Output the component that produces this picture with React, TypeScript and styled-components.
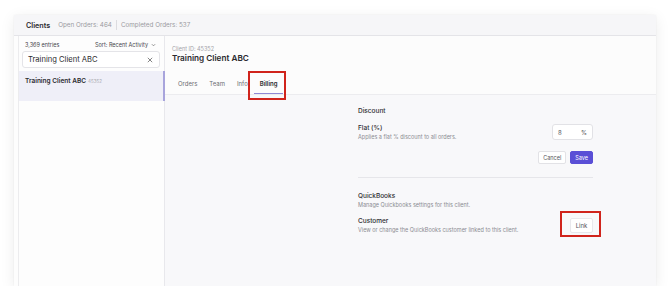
import React from "react";
import styled, { createGlobalStyle } from "styled-components";

const Global = createGlobalStyle`
  html, body { margin: 0; padding: 0; background: #ffffff; }
  body { font-family: Inter, "Noto Sans", sans-serif; color: #2f2f33; }
  * { box-sizing: border-box; }
`;

const Card = styled.div`
  margin: 15px 0 0 14px;
  width: 642px;
  height: 271px;
  background: #fdfdfd;
  box-shadow: 0 3px 14px rgba(0, 0, 0, 0.08), 0 0 2px rgba(0, 0, 0, 0.05);
  display: flex;
  flex-direction: column;
`;

const Header = styled.div`
  height: 21px;
  background: #f6f6f8;
  border-bottom: 1px solid #e4e4e8;
  display: flex;
  align-items: center;
  padding-left: 12px;
  font-size: 6.3px;
  color: #9a9aa0;
`;

const HeaderTitle = styled.span`
  font-size: 7.2px;
  font-weight: 600;
  color: #2c2c30;
  margin-right: 8px;
`;

const Sep = styled.span`
  width: 1px;
  height: 10px;
  background: #dcdce0;
  margin: 0 4px;
`;

const Body = styled.div`
  flex: 1;
  display: flex;
  min-height: 0;
`;

const Gutter = styled.div`
  width: 5px;
  background: #fdfdfd;
  border-right: 1px solid #ececee;
`;

const Sidebar = styled.div`
  width: 146px;
  background: #fdfdfd;
  border-right: 1px solid #e8e8ec;
  display: flex;
  flex-direction: column;
`;

const SideTop = styled.div`
  display: flex;
  justify-content: space-between;
  align-items: center;
  padding: 4px 8px 0 6px;
  height: 13px;
  font-size: 5.5px;
  color: #46464c;
`;

const SortLabel = styled.span`
  display: flex;
  align-items: center;
  gap: 3px;
`;

const Search = styled.div`
  margin: 2px 4px 3px 3px;
  height: 17px;
  border: 1px solid #e4e4e8;
  border-radius: 3px;
  background: #fff;
  display: flex;
  align-items: center;
  justify-content: space-between;
  padding: 0 6px 0 5px;
  font-size: 7.6px;
  color: #2c2c30;
`;

const Item = styled.div<{ $active?: boolean }>`
  height: 30px;
  background: ${(p) => (p.$active ? "#efeff8" : "transparent")};
  border-right: 2px solid ${(p) => (p.$active ? "#a8a4dc" : "transparent")};
  margin-right: -1px;
  padding: 6px 6px;
  font-size: 6.5px;
  font-weight: 600;
  color: #2c2c30;
`;

const ItemId = styled.span`
  font-size: 4.5px;
  font-weight: 400;
  color: #a8a8ae;
  margin-left: 2px;
`;

const Main = styled.div`
  flex: 1;
  display: flex;
  flex-direction: column;
  background: #f8f8fa;
`;

const MainTop = styled.div`
  position: relative;
  background: #fcfcfc;
  border-bottom: 1px solid #ececef;
  padding: 10px 0 0 7px;
  height: 59px;
  display: flex;
  flex-direction: column;
`;

const ClientId = styled.div`
  font-size: 5.5px;
  color: #a4a4aa;
`;

const Title = styled.div`
  font-size: 8.2px;
  font-weight: 600;
  color: #2a2a2e;
  margin-top: 1px;
`;

const Tabs = styled.div`
  display: flex;
  margin-top: 17px;
`;

const Tab = styled.div<{ $active?: boolean }>`
  font-size: 6px;
  color: ${(p) => (p.$active ? "#2a2a2e" : "#6c6c72")};
  font-weight: ${(p) => (p.$active ? 600 : 400)};
  padding: 0 6px 6px;
  border-bottom: 1px solid ${(p) => (p.$active ? "#8f89d4" : "transparent")};
`;

const Highlight = styled.div<{ $l: number; $t: number; $w: number; $h: number }>`
  position: absolute;
  left: ${(p) => p.$l}px;
  top: ${(p) => p.$t}px;
  width: ${(p) => p.$w}px;
  height: ${(p) => p.$h}px;
  border: 2.5px solid #d0241c;
  pointer-events: none;
`;

const Content = styled.div`
  padding: 12px 0 0 193px;
  width: 428px;
  display: flex;
  flex-direction: column;
`;

const SectionTitle = styled.div<{ $mt?: number }>`
  font-size: 6.5px;
  font-weight: 500;
  color: #2c2c30;
  margin-top: ${(p) => p.$mt ?? 0}px;
`;

const Row = styled.div<{ $mt: number }>`
  display: flex;
  justify-content: space-between;
  align-items: center;
  margin-top: ${(p) => p.$mt}px;
  position: relative;
`;

const Label = styled.div`
  font-size: 6.5px;
  font-weight: 500;
  color: #2c2c30;
`;

const Help = styled.div`
  font-size: 5.5px;
  color: #8c8c92;
  margin-top: 2px;
`;

const Input = styled.div`
  width: 41px;
  height: 16px;
  border: 1px solid #e2e2e6;
  border-radius: 3px;
  background: #fff;
  display: flex;
  align-items: center;
  justify-content: space-between;
  padding: 0 5px;
  font-size: 6px;
  color: #55555a;
`;

const Actions = styled.div`
  display: flex;
  justify-content: flex-end;
  gap: 4px;
  margin-top: 11px;
`;

const Button = styled.div<{ $primary?: boolean }>`
  height: 13px;
  padding: 0 4px;
  border-radius: 2px;
  display: flex;
  align-items: center;
  font-size: 5.5px;
  background: ${(p) => (p.$primary ? "#5a4fd6" : "#fff")};
  color: ${(p) => (p.$primary ? "#fff" : "#55555a")};
  border: 1px solid ${(p) => (p.$primary ? "#5a4fd6" : "#e2e2e6")};
`;

const LinkBtn = styled.div`
  height: 15px;
  width: 23px;
  border-radius: 2px;
  border: 1px solid #e8e8ec;
  background: #fff;
  display: flex;
  align-items: center;
  justify-content: center;
  font-size: 6px;
  color: #55555a;
`;

const Divider = styled.div`
  height: 1px;
  background: #e6e6ea;
  margin-top: 13px;
`;

export default function App() {
  return (
    <>
      <Global />
      <Card>
        <Header>
          <HeaderTitle>Clients</HeaderTitle>
          <span>Open Orders: 464</span>
          <Sep />
          <span>Completed Orders: 537</span>
        </Header>
        <Body>
          <Gutter />
          <Sidebar>
            <SideTop>
              <span>3,369 entries</span>
              <SortLabel>
                Sort: Recent Activity
                <svg width="5" height="4" viewBox="0 0 6 4">
                  <path d="M1 1l2 2 2-2" fill="none" stroke="#666" strokeWidth="0.8" />
                </svg>
              </SortLabel>
            </SideTop>
            <Search>
              <span>Training Client ABC</span>
              <svg width="6" height="6" viewBox="0 0 6 6">
                <path d="M0.8 0.8l4.4 4.4M5.2 0.8L0.8 5.2" stroke="#666" strokeWidth="0.8" />
              </svg>
            </Search>
            <Item $active>
              Training Client ABC<ItemId>45352</ItemId>
            </Item>
          </Sidebar>
          <Main>
            <MainTop>
              <ClientId>Client ID: 45352</ClientId>
              <Title>Training Client ABC</Title>
              <Tabs>
                <Tab>Orders</Tab>
                <Tab>Team</Tab>
                <Tab>Info</Tab>
                <Tab $active>Billing</Tab>
              </Tabs>
              <Highlight $l={83} $t={35} $w={38} $h={29} />
            </MainTop>
            <Content>
              <SectionTitle>Discount</SectionTitle>
              <Row $mt={9}>
                <div>
                  <Label>Flat (%)</Label>
                  <Help>Applies a flat % discount to all orders.</Help>
                </div>
                <Input>
                  <span>8</span>
                  <span>%</span>
                </Input>
              </Row>
              <Actions>
                <Button>Cancel</Button>
                <Button $primary>Save</Button>
              </Actions>
              <Divider />
              <SectionTitle $mt={14}>QuickBooks</SectionTitle>
              <Help>Manage Quickbooks settings for this client.</Help>
              <Row $mt={9}>
                <div>
                  <Label>Customer</Label>
                  <Help>View or change the QuickBooks customer linked to this client.</Help>
                </div>
                <LinkBtn>Link</LinkBtn>
                <Highlight $l={202} $t={-6} $w={41} $h={26} />
              </Row>
            </Content>
          </Main>
        </Body>
      </Card>
    </>
  );
}
